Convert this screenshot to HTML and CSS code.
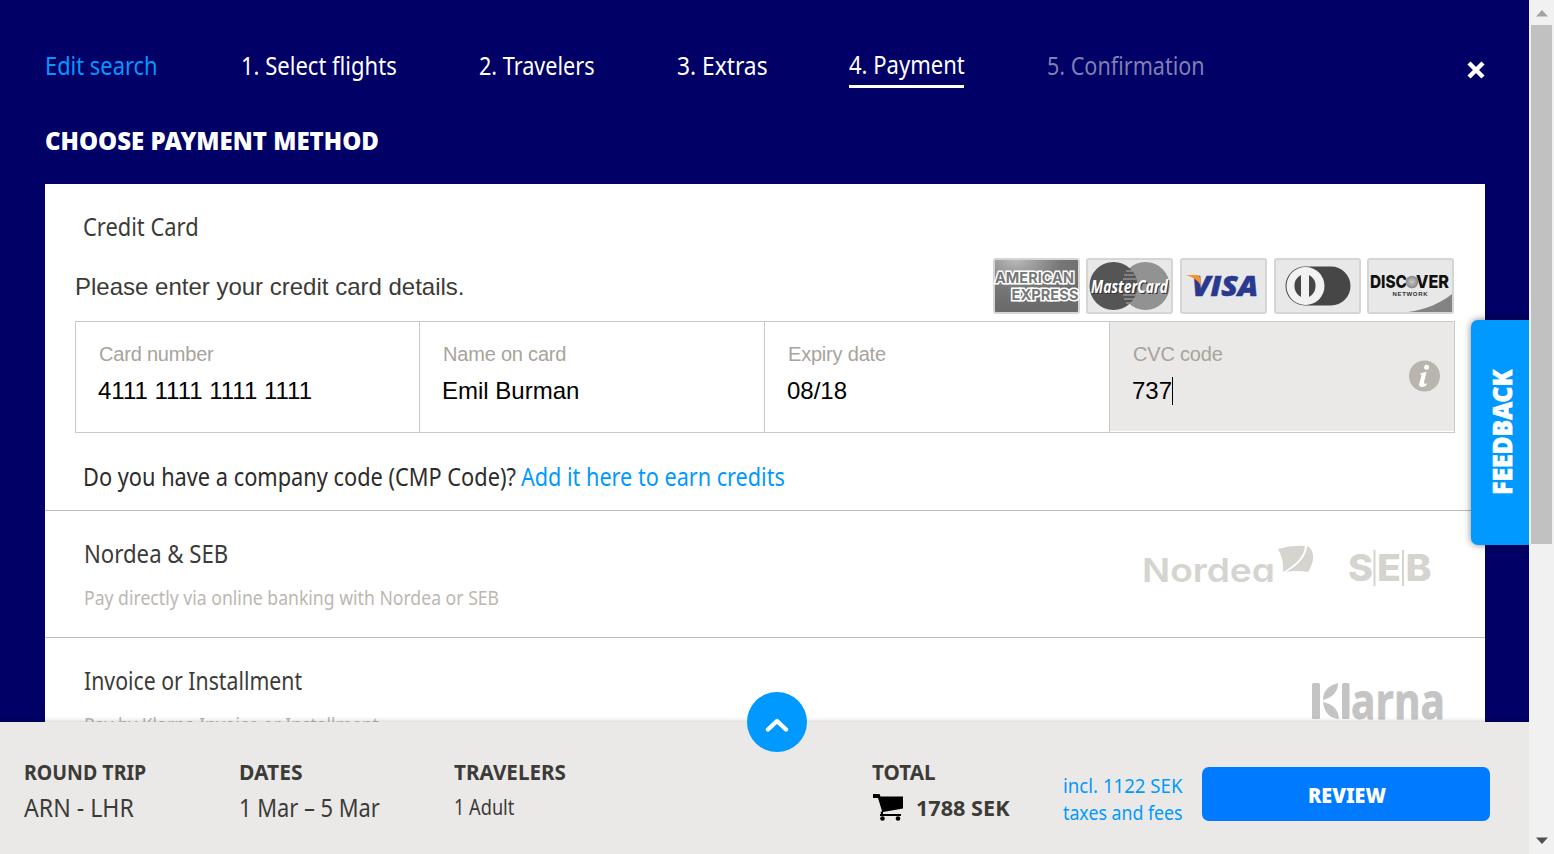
FILE: index.html
```
<!DOCTYPE html>
<html lang="en">
<head>
<meta charset="utf-8">
<title>Choose payment method</title>
<link rel="stylesheet" href="styles.css">
</head>
<body>
<div class="page">
  <main class="content">
    <nav class="steps">
      <a class="edit"><span class="t s-edit">Edit search</span></a>
      <a><span class="t s-flights">1. Select flights</span></a>
      <a><span class="t s-trav">2. Travelers</span></a>
      <a><span class="t s-extras">3. Extras</span></a>
      <a class="current"><span class="t s-pay">4. Payment</span></a>
      <a class="disabled"><span class="t s-conf">5. Confirmation</span></a>
      <svg class="close" width="20" height="20" viewBox="0 0 20 20"><path d="M3 3L17 17M17 3L3 17" stroke="#fff" stroke-width="4.400"/></svg>
    </nav>
    <h1><span class="t s-h1">CHOOSE PAYMENT METHOD</span></h1>
    <div class="methods">
      <section class="credit">
        <h2><span class="t s-credit">Credit Card</span></h2>
        <div class="intro">
          <p>Please enter your credit card details.</p>
          <div class="cards">
            <svg width="87" height="56" viewBox="0 0 87 56">
              <defs><radialGradient id="amex" cx=".25" cy="0" r=".9"><stop offset="0" stop-color="#bbb"/><stop offset=".6" stop-color="#777"/><stop offset="1" stop-color="#6b6b6b"/></radialGradient></defs>
              <rect x="1" y="1" width="85" height="54" rx="2" fill="url(#amex)" stroke="#d5d5d5" stroke-width="2"/>
              <g class="amex"><text x="2" y="25" textLength="79" lengthAdjust="spacingAndGlyphs">AMERICAN</text><text x="18.500" y="41.500" textLength="67" lengthAdjust="spacingAndGlyphs">EXPRESS</text></g>
            </svg>
            <svg width="87" height="56" viewBox="0 0 87 56">
              <rect x="1" y="1" width="85" height="54" rx="2" fill="#e8e8e8" stroke="#d5d5d5" stroke-width="2"/>
              <circle cx="59.500" cy="28" r="24" fill="#929292"/><circle cx="27.500" cy="28" r="24" fill="#555"/>
              <path d="M40 13h7M38 17h10M37 21h13M37 37h13M38 41h10M40 45h7" stroke="#929292" stroke-width="1.500"/>
              <text class="mc mc-shadow" x="6" y="35.500" textLength="77" lengthAdjust="spacingAndGlyphs">MasterCard</text><text class="mc" x="5" y="34.500" textLength="77" lengthAdjust="spacingAndGlyphs">MasterCard</text>
            </svg>
            <svg width="87" height="56" viewBox="0 0 87 56">
              <rect x="1" y="1" width="85" height="54" rx="2" fill="#e8e8e8" stroke="#d5d5d5" stroke-width="2"/>
              <text class="visa" x="12" y="38" textLength="66" lengthAdjust="spacingAndGlyphs">VISA</text>
              <path fill="#f7942d" d="M6 17h11q2.500 0 3 2.500l1.500 8.500Q16 19.500 6 17z"/>
            </svg>
            <svg width="87" height="56" viewBox="0 0 87 56">
              <rect x="1" y="1" width="85" height="54" rx="2" fill="#e8e8e8" stroke="#d5d5d5" stroke-width="2"/>
              <path d="M31 8.500H57a19.500 19.500 0 0 1 0 39H31a19.500 19.500 0 0 1 0-39z" fill="#464646"/>
              <circle cx="31.500" cy="28" r="19" fill="#f2f2f2"/><path d="M27 17v22a12.500 12.500 0 0 1 0-22zM35 17v22a12.500 12.500 0 0 0 0-22z" fill="#464646"/>
            </svg>
            <svg width="87" height="56" viewBox="0 0 87 56">
              <defs><radialGradient id="ball"><stop offset="0" stop-color="#c8c8c8"/><stop offset="1" stop-color="#888"/></radialGradient></defs>
              <rect x="1" y="1" width="85" height="54" rx="2" fill="#e8e8e8" stroke="#d5d5d5" stroke-width="2"/>
              <path d="M41 54C58 52 74 45 85 36v18z" fill="#838383"/>
              <g class="disc"><text x="3" y="30" textLength="37" lengthAdjust="spacingAndGlyphs">DISC</text><text x="49" y="30" textLength="33" lengthAdjust="spacingAndGlyphs">VER</text></g>
              <circle cx="45" cy="24" r="6.300" fill="url(#ball)"/>
              <text class="net" x="25.500" y="37.500" textLength="35">NETWORK</text>
            </svg>
          </div>
        </div>
        <div class="fields">
          <div class="field"><label>Card number</label><div class="value">4111 1111 1111 1111</div></div>
          <div class="field"><label>Name on card</label><div class="value">Emil Burman</div></div>
          <div class="field"><label>Expiry date</label><div class="value">08/18</div></div>
          <div class="field active"><div><label>CVC code</label><div class="value">737<i class="caret"></i></div></div>
            <svg class="info" width="32" height="32" viewBox="0 0 32 32"><circle cx="16.500" cy="16" r="15.500" fill="#b9b5ae"/><circle cx="18.600" cy="7.200" r="2.500" fill="#fff"/><path d="M12.500 13.500q3-1.300 6-1.500l-2.500 10q-.5 2.700 3.500 1.500-2 3.500-6 3.500-3.200-.3-2.200-3.500l2.200-8q.2-1.500-1.500-1z" fill="#fff"/></svg>
          </div>
        </div>
        <p class="cmp"><span class="cell"><span class="t s-cmp">Do you have a company code (CMP Code)?</span></span><a><span class="t s-add">Add it here to earn credits</span></a></p>
      </section>
      <section class="bank">
        <div><h2><span class="t s-nordea">Nordea &amp; SEB</span></h2><p class="note"><span class="t s-note">Pay directly via online banking with Nordea or SEB</span></p></div>
        <svg width="290" height="42" viewBox="0 0 290 42" fill="#d5d4cf">
          <text class="nordea" x="-1" y="37" textLength="133" lengthAdjust="spacingAndGlyphs">Nordeɑ</text>
          <path d="M135 4q13-4 27-3-1 14-22 26 1-13-5-23zM164 1q7 3 6 14-2 8-5 12-12-2-22 0 20-11 21-26z"/>
          <g class="seb"><text x="205" y="36" textLength="25" lengthAdjust="spacingAndGlyphs">S</text><text x="234" y="36" textLength="24" lengthAdjust="spacingAndGlyphs">E</text><text x="262.500" y="36" textLength="26" lengthAdjust="spacingAndGlyphs">B</text></g>
          <path d="M230.500 5h2v36h-2zM259 5h2v36h-2z"/>
        </svg>
      </section>
      <section class="invoice">
        <div><h2><span class="t s-inv">Invoice or Installment</span></h2><p class="note"><span class="t s-note2">Pay by Klarna Invoice or Installment</span></p></div>
        <svg width="136" height="39" viewBox="0 0 136 39" fill="#c4c4c4">
          <rect x="2" y="1" width="8" height="36" rx="1.500"/><rect x="32" y="1" width="7.500" height="36" rx="1.500"/>
          <path d="M28 1q0 13-15 17 0-13 15-17zM13 20q15 3 16 17-14-1-16-17z"/>
          <text class="klarna" x="41" y="36.500" textLength="94" lengthAdjust="spacingAndGlyphs">arna</text>
        </svg>
      </section>
    </div>
    <aside class="feedback"><span>FEEDBACK</span></aside>
  </main>
  <footer class="summary">
    <div class="col c1"><b><span class="t s-round">ROUND TRIP</span></b><p><span class="t s-arn">ARN - LHR</span></p></div>
    <div class="col c2"><b><span class="t s-dates">DATES</span></b><p><span class="t s-mar">1 Mar – 5 Mar</span></p></div>
    <div class="col c3"><b><span class="t s-travs">TRAVELERS</span></b><p class="small"><span class="t s-adult">1 Adult</span></p></div>
    <div class="col c4"><b><span class="t s-total">TOTAL</span></b>
      <div class="price"><svg width="32" height="28" viewBox="0 0 32 28"><path d="M1 0h6.500l1 2.500H31v12L11 18v2H29v2H10l-1.500-3.500L10 17 6 4H1z"/><path d="M8 20h21v2H8z"/><circle cx="10.500" cy="24.500" r="2.300"/><circle cx="26" cy="24.500" r="2.300"/></svg><span class="t s-sek">1788 SEK</span></div></div>
    <div class="taxes"><span class="t s-incl">incl. 1122 SEK</span><span class="t s-taxes">taxes and fees</span></div>
    <div class="review"><span class="t s-review">REVIEW</span></div>
    <div class="toggle"><svg width="24" height="16" viewBox="0 0 24 16"><path d="M3 12.500L12 4L21 12.500" fill="none" stroke="#fff" stroke-width="4.400" stroke-linecap="round" stroke-linejoin="round"/></svg></div>
  </footer>
</div>
<div class="scrollbar">
  <svg width="12" height="7" viewBox="0 0 12 7"><path d="M0 6.500L6 0l6 6.500z" fill="#a3a3a3"/></svg>
  <div class="thumb"></div>
  <svg class="down" width="12" height="7" viewBox="0 0 12 7"><path d="M0 .5h12L6 7z" fill="#505050"/></svg>
</div>
</body>
</html>
```
FILE: styles.css
```
* { box-sizing: border-box; }
body { margin: 0; width: 1554px; height: 854px; display: flex; overflow: hidden; font-family: "Noto Sans", sans-serif; color: #3c3b38; }
h1, h2, p { margin: 0; font-weight: 400; }
svg { display: block; flex: none; }
.page { width: 1529px; height: 854px; }
.content { height: 722px; background: #006; padding: 50px 44px 0 45px; overflow: hidden; position: relative; }

/* Narrowed lettering */
.t { display: inline-block; white-space: nowrap; transform-origin: 0 50%; transform: scaleX(.875); }
.s-trav, .s-adult, .s-add { transform: scaleX(.865); }
.s-cmp { transform: scaleX(.871); }
.s-extras { transform: scaleX(.91); }
.s-flights, .s-pay, .s-note { transform: scaleX(.881); }
.s-conf { transform: scaleX(.863); }
.s-h1 { transform: scaleX(.96); }
.s-nordea, .s-taxes { transform: scaleX(.887); }
.s-inv { transform: scaleX(.85); }
.s-round, .s-incl { transform: scaleX(.931); }
.s-arn { transform: scaleX(.925); }
.s-mar { transform: scaleX(.874); }
.s-travs, .s-total, .s-sek { transform: scaleX(.983); }
.s-dates { transform: none; }
.s-review { transform: scaleX(.94); }

.steps { display: grid; grid-template-columns: 196px 238px 198px 172px 198px 1fr 20px; height: 76px; font-size: 25px; line-height: 31px; color: #fff; }
.edit { color: #09f; }
.current { width: 115px; height: 38px; border-bottom: 3px solid #fff; line-height: 29px; }
.disabled { color: #7f7fb2; }
.close { margin-top: 10px; margin-left: 1px; }
h1 { height: 58px; line-height: 28px; font-size: 25px; font-weight: 900; color: #fff; }
.methods { background: #fff; height: 640px; }
h2 { font-size: 25px; line-height: 29px; height: 43px; }

.credit { height: 327px; border-bottom: 1px solid #bcbbb5; padding: 28px 30px 0; }
.credit h2, .cmp { margin-left: 8px; }
.intro { display: flex; justify-content: space-between; height: 66px; padding-top: 3px; font-family: "Liberation Sans", Arial, sans-serif; font-size: 24px; }
.intro p { line-height: 57px; }
.cards { display: grid; grid-template-columns: 93px 94px 94px 93px 87px; margin-right: 1px; }
.amex { font: bold 14.500px Inter, sans-serif; fill: #777; stroke: #fff; stroke-width: 3px; paint-order: stroke; }
.mc { font: italic bold 18px "Open Sans", sans-serif; fill: #fff; }
.mc-shadow { fill: #333; }
.visa { font: italic 800 29px "Open Sans", sans-serif; fill: #2a3990; stroke: #2a3990; stroke-width: .6px; }
.disc { font: 800 18px Inter, sans-serif; fill: #111; }
.net { font: bold 6px "Liberation Sans", sans-serif; fill: #333; }
.fields { display: grid; grid-template-columns: 344px 345px 345px 344px; height: 112px; border: 1px solid #c9c9c9; font-family: "Liberation Sans", Arial, sans-serif; }
.field { padding: 20px 22px 0; border-right: 1px solid #c9c9c9; }
.field label { display: block; font-size: 20px; line-height: 24px; padding-left: 1px; letter-spacing: -.2px; color: #a8a39b; }
.value { font-size: 24px; line-height: 30px; margin-top: 10px; color: #000; display: flex; align-items: center; }
.caret { width: 1px; height: 28px; background: #000; }
.active { background: #eae9e7; height: 109px; display: flex; justify-content: space-between; border-right: 0; padding-right: 14px; }
.info { margin-top: 18px; }
.cmp { display: flex; font-size: 25px; line-height: 32px; margin-top: 27px; color: #2c2c2c; }
.cell { width: 438px; }
.cmp a { color: #09f; }

.bank { display: flex; justify-content: space-between; height: 127px; padding: 28px 53px 0 39px; border-bottom: 1px solid #bcbbb5; }
.note { font-size: 20px; line-height: 32px; color: #bcb7b0; }
.bank svg { margin-top: 6px; margin-right: -1px; }
.nordea { font: 600 33px Inter, sans-serif; }
.seb { font: 800 37px Inter, sans-serif; }
.invoice { display: flex; justify-content: space-between; padding: 28px 39px 0 39px; }
.invoice svg { margin-top: 16px; }
.klarna { font: bold 48px "Open Sans", sans-serif; stroke: #c4c4c4; stroke-width: .8px; }

.feedback { position: absolute; left: 1471px; top: 320px; width: 58px; height: 225px; background: #09f; border-radius: 7px 0 0 7px; box-shadow: 0 0 7px rgba(0,0,0,.5); display: flex; align-items: center; justify-content: center; }
.feedback span { writing-mode: vertical-rl; transform: rotate(180deg) scaleY(.947); font-size: 26px; line-height: 58px; font-weight: 900; color: #fff; padding-right: 4px; -webkit-text-stroke: .6px #fff; }

.summary { position: relative; height: 132px; background: #eae9e7; box-shadow: 0 0 5px rgba(0,0,0,.28); display: flex; padding: 36px 39px 0 24px; }
.c1, .c2 { width: 215px; }
.c3 { width: 418px; }
.c4 { width: 191px; }
.col b { display: block; font-size: 21px; line-height: 28px; }
.col p { font-size: 25px; line-height: 29px; margin-top: 7px; }
.col .small { font-size: 21px; }
.price { display: flex; align-items: center; gap: 12px; margin-top: 6px; font-size: 22px; font-weight: 700; line-height: 31px; }
.taxes { width: 139px; display: flex; flex-direction: column; align-items: flex-start; padding-top: 14px; font-size: 20px; line-height: 27px; color: #09f; white-space: nowrap; }
.review { width: 288px; height: 54px; margin-top: 9px; border-radius: 7px; background: #007bff; color: #fff; font-size: 21px; font-weight: 900; line-height: 56px; padding-left: 106px; }
.toggle { position: absolute; left: 747px; top: -30px; width: 60px; height: 60px; border-radius: 50%; background: #09f; display: flex; align-items: center; justify-content: center; padding-top: 6px; }

.scrollbar { position: relative; width: 25px; height: 854px; background: #f1f1f1; display: flex; flex-direction: column; align-items: center; padding: 10px 0; }
.thumb { width: 21px; height: 519px; margin-top: 8px; background: #c1c1c1; }
.down { margin-top: auto; }
```
